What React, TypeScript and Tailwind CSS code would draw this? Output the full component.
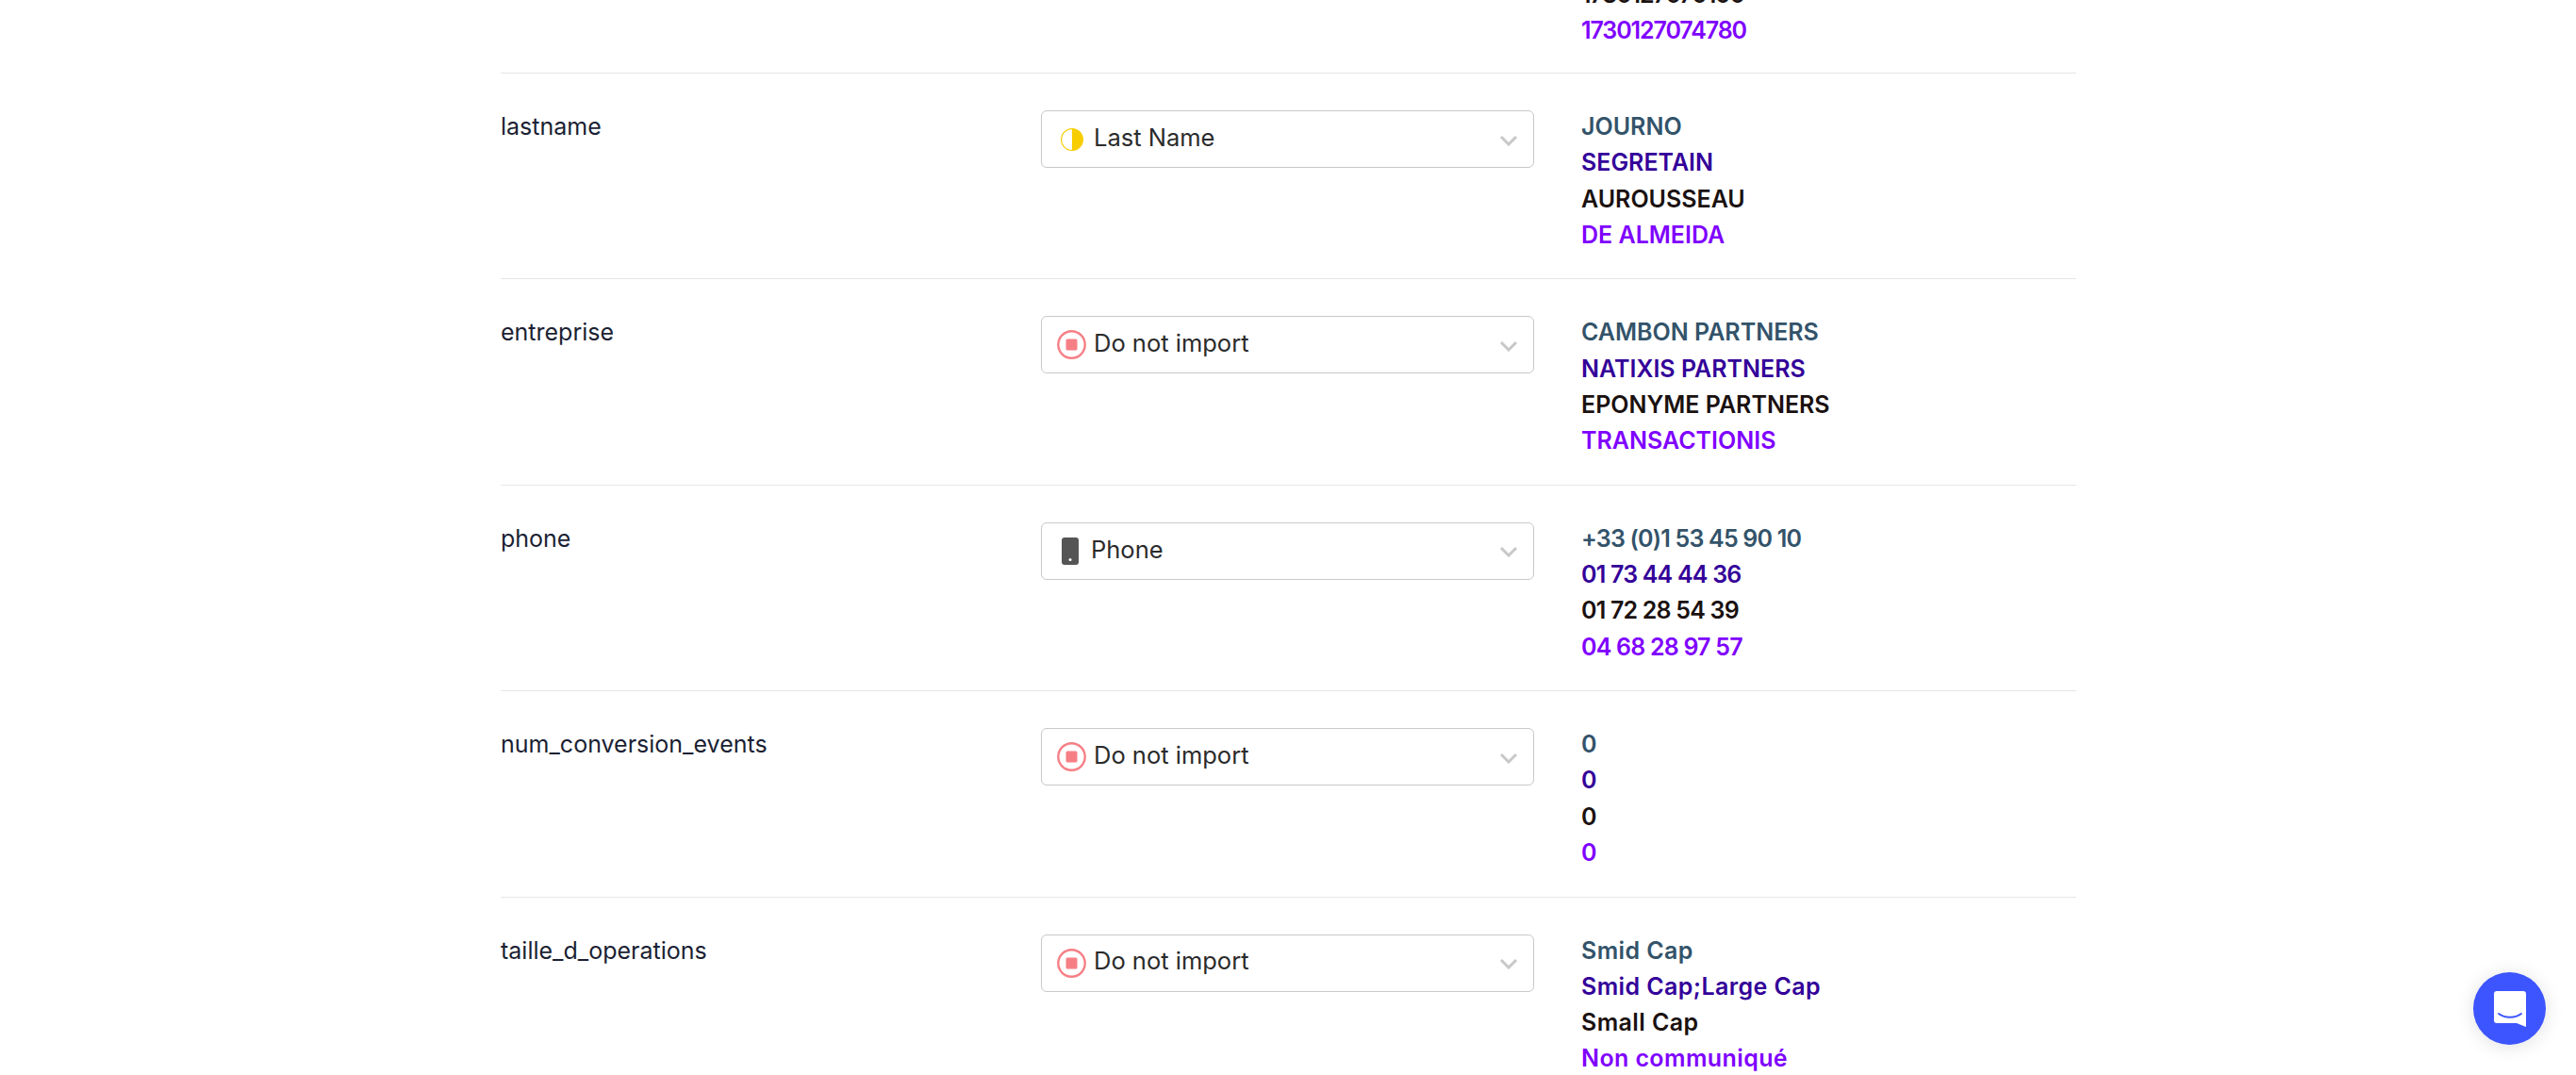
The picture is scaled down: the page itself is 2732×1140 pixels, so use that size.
const rows = [
  {
    name: "lastname",
    kind: "name",
    label: "Last Name",
    values: ["JOURNO", "SEGRETAIN", "AUROUSSEAU", "DE ALMEIDA"],
    spacing: "",
  },
  {
    name: "entreprise",
    kind: "skip",
    label: "Do not import",
    values: ["CAMBON PARTNERS", "NATIXIS PARTNERS", "EPONYME PARTNERS", "TRANSACTIONIS"],
    spacing: "",
  },
  {
    name: "phone",
    kind: "phone",
    label: "Phone",
    values: ["+33 (0)1 53 45 90 10", "01 73 44 44 36", "01 72 28 54 39", "04 68 28 97 57"],
    spacing: "tracking-[-0.8px]",
  },
  {
    name: "num_conversion_events",
    kind: "skip",
    label: "Do not import",
    values: ["0", "0", "0", "0"],
    spacing: "",
  },
  {
    name: "taille_d_operations",
    kind: "skip",
    label: "Do not import",
    values: ["Smid Cap", "Smid Cap;Large Cap", "Small Cap", "Non communiqué"],
    spacing: "tracking-[0.4px]",
  },
];

const valueColors = ["text-[#33536a]", "text-[#330099]", "text-[#1a1110]", "text-[#7f00ff]"];

function FieldIcon({ kind }: { kind: string }) {
  if (kind === "name") {
    return (
      <svg width="24" height="24" viewBox="0 0 24 24" className="ml-[5px] mr-[11px] shrink-0">
        <circle cx="12" cy="12" r="11.4" fill="#fff" stroke="#f8cd00" strokeWidth="1.2" />
        <path d="M12 .6a11.4 11.4 0 0 1 0 22.8z" fill="#f8cd00" />
      </svg>
    );
  }
  if (kind === "phone") {
    return (
      <svg width="18" height="29" viewBox="0 0 18 29" className="ml-[6px] mr-[13px] shrink-0">
        <rect x="0" y="0" width="18" height="29" rx="3" fill="#555" />
        <circle cx="9" cy="23.5" r="1.5" fill="#fff" />
      </svg>
    );
  }
  return (
    <svg width="31" height="31" viewBox="0 0 31 31" className="ml-[1px] mr-[8px] shrink-0">
      <circle cx="15.5" cy="15.5" r="14.2" fill="#fff" stroke="#f67f86" strokeWidth="2.4" />
      <rect x="9.5" y="9.5" width="12" height="12" rx="1.5" fill="#f67f86" />
    </svg>
  );
}

function FieldSelect({ kind, label }: { kind: string; label: string }) {
  return (
    <div className="h-[61px] mr-px flex items-center pl-[15px] pr-[16px] rounded-[6px] border border-[#c8c8c8] bg-white">
      <FieldIcon kind={kind} />
      <span className="text-[#2b2b2b] text-[25.5px] leading-none -mt-[4px]">{label}</span>
      <svg width="20" height="12" viewBox="0 0 20 12" className="ml-auto mt-[2px]">
        <path d="M2 2l8 8 8-8" fill="none" stroke="#c8c8c8" strokeWidth="3" />
      </svg>
    </div>
  );
}

function ValueList({ values, spacing }: { values: string[]; spacing: string }) {
  return (
    <div className={`-mt-[2px] font-semibold text-[25px] leading-[38.3px] ${spacing}`}>
      {values.map((value, i) => (
        <div key={i} className={valueColors[i]}>
          {value}
        </div>
      ))}
    </div>
  );
}

export default function App() {
  return (
    <div className="relative h-[1140px] overflow-hidden bg-white font-['Inter',sans-serif]">
      <div className="ml-[531px] w-[1671px]">
        <div className="grid grid-cols-[524px_524px_1fr] gap-x-[49px] h-[78px] border-b border-[#e6e6e6] overflow-hidden">
          <div />
          <div />
          <div className="font-semibold text-[25px] leading-[38.3px] tracking-[-1.1px] -mt-[25px]">
            <div className="text-[#1a1110]">1730127070100</div>
            <div className="text-[#7f00ff]">1730127074780</div>
          </div>
        </div>
        {rows.map((row) => (
          <div
            key={row.name}
            className="grid grid-cols-[524px_524px_1fr] gap-x-[49px] h-[218.4px] pt-[39px] border-b border-[#e6e6e6]"
          >
            <div className="-mt-[2px] text-[#1b1f33] text-[25px] leading-[38px]">{row.name}</div>
            <FieldSelect kind={row.kind} label={row.label} />
            <ValueList values={row.values} spacing={row.spacing} />
          </div>
        ))}
      </div>

      <div className="absolute left-[2623px] top-[1031px] w-[77px] h-[77px] rounded-full bg-[#3d55ff] flex items-center justify-center shadow-[0_2px_20px_rgba(0,0,0,0.12)]">
        <svg width="34" height="38" viewBox="0 0 34 38">
          <path d="M3 0h28a3 3 0 0 1 3 3v35l-10-4H3a3 3 0 0 1-3-3V3a3 3 0 0 1 3-3z" fill="#fff" />
          <path d="M5 24c7 5 17 5 24 0" fill="none" stroke="#3d55ff" strokeWidth="2" strokeLinecap="round" />
        </svg>
      </div>
    </div>
  );
}
